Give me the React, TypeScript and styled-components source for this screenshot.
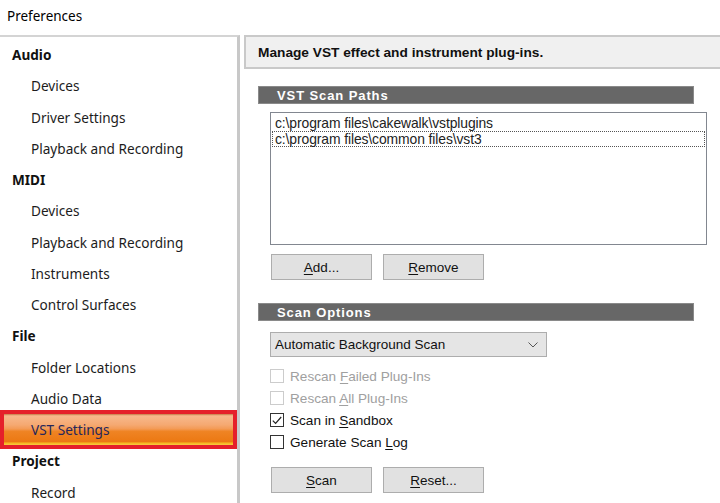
import React from 'react'
import styled, { createGlobalStyle } from 'styled-components'

const GlobalStyle = createGlobalStyle`
  html, body {
    margin: 0;
    padding: 0;
    background: #ffffff;
  }
  body {
    width: 720px;
    height: 503px;
    overflow: hidden;
    font-family: "Noto Sans", "Liberation Sans", sans-serif;
  }
`

const Window = styled.div`
  width: 720px;
  height: 503px;
  display: flex;
  flex-direction: column;
  background: #fff;
  overflow: hidden;
`

const TitleBar = styled.div`
  height: 35px;
  flex: none;
  display: flex;
  align-items: center;
  padding: 0 0 3px 7px;
  box-sizing: border-box;
  font-size: 13.5px;
  color: #000;
`

const Body = styled.div`
  flex: 1;
  display: flex;
  gap: 4px;
  min-height: 0;
`

const Tree = styled.div`
  width: 240px;
  flex: none;
  box-sizing: border-box;
  border-top: 2px solid #d4d4d4;
  border-right: 3px solid #c8c8c8;
  padding-top: 2px;
  display: flex;
  flex-direction: column;
  overflow: hidden;
`

const TreeRow = styled.div<{ $level: number; $selected?: boolean }>`
  height: 31.25px;
  flex: none;
  display: flex;
  align-items: center;
  box-sizing: border-box;
  padding-left: ${p => (p.$level === 0 ? 12 : 31)}px;
  font-size: 13.6px;
  font-weight: ${p => (p.$level === 0 ? 700 : 400)};
  color: ${p => (p.$level === 0 ? '#111' : '#1c1c1c')};
  white-space: nowrap;
  ${p =>
    p.$selected &&
    `
    height: 38.5px;
    margin: -3.6px 0;
    border: 4px solid #e5202a;
    padding-left: 27px;
    color: #26265c;
    background:
      linear-gradient(180deg,
        #c27a45 0%,
        #f7b88c 6%,
        #f5a972 35%,
        #f39a55 48%,
        #ef8424 56%,
        #ec7812 90%,
        #f4b21c 93%,
        #f8cc40 100%);
  `}
`

const Content = styled.div`
  flex: 1;
  display: flex;
  flex-direction: column;
  margin-right: -6px;
`

const Header = styled.div`
  height: 34px;
  flex: none;
  box-sizing: border-box;
  border: 2px solid #c9c9c9;
  background: #f0f0f0;
  display: flex;
  align-items: center;
  padding-left: 12px;
  font-family: "Liberation Sans", Arial, sans-serif;
  font-weight: 700;
  font-size: 13.7px;
  color: #111;
`

const Pane = styled.div`
  padding-left: 14px;
  display: flex;
  flex-direction: column;
  align-items: flex-start;
  font-family: "Liberation Sans", Arial, sans-serif;
`

const SectionBar = styled.div<{ $top: number }>`
  margin-top: ${p => p.$top}px;
  width: 436px;
  height: 18px;
  box-sizing: border-box;
  background: #676767;
  border: 1px solid #8a8a8a;
  color: #fff;
  font-weight: 700;
  font-size: 13px;
  letter-spacing: 0.9px;
  padding-left: 18px;
  display: flex;
  align-items: center;
`

const ListBox = styled.div`
  margin: 8px 0 0 12px;
  width: 437px;
  height: 133px;
  box-sizing: border-box;
  border: 1px solid #828790;
  background: #fff;
  padding: 2px 1px;
  display: flex;
  flex-direction: column;
`

const ListItem = styled.div<{ $focused?: boolean }>`
  height: 16px;
  box-sizing: border-box;
  display: flex;
  align-items: center;
  padding-left: 2px;
  font-size: 13.9px;
  color: #222;
  letter-spacing: -0.1px;
  border: 1px ${p => (p.$focused ? 'dotted #555' : 'solid transparent')};
`

const ButtonRow = styled.div<{ $top: number }>`
  margin: ${p => p.$top}px 0 0 13px;
  display: flex;
  gap: 11px;
`

const Button = styled.button`
  width: 101px;
  height: 26px;
  box-sizing: border-box;
  border: 1px solid #adadad;
  background: #e1e1e1;
  font-family: "Liberation Sans", Arial, sans-serif;
  font-size: 13.5px;
  color: #111;
  padding: 0;
  u {
    text-decoration-thickness: 1px;
    text-underline-offset: 2px;
  }
`

const Select = styled.div`
  margin: 11px 0 0 12px;
  width: 277px;
  height: 25px;
  box-sizing: border-box;
  border: 1px solid #adadad;
  background: #e5e5e5;
  display: flex;
  align-items: center;
  justify-content: space-between;
  padding: 0 8px 0 4px;
  font-size: 13.5px;
  color: #111;
`

const CheckList = styled.div`
  margin: 8px 0 0 12px;
  display: flex;
  flex-direction: column;
`

const CheckRow = styled.div<{ $disabled?: boolean }>`
  height: 22px;
  display: flex;
  align-items: center;
  gap: 6px;
  font-size: 13.6px;
  color: ${p => (p.$disabled ? '#a0a0a0' : '#111')};
  u {
    text-underline-offset: 2px;
  }
`

const Box = styled.span<{ $disabled?: boolean }>`
  width: 14px;
  height: 14px;
  box-sizing: border-box;
  border: 1px solid ${p => (p.$disabled ? '#cccccc' : '#333')};
  background: #fff;
  display: flex;
  align-items: center;
  justify-content: center;
`

const treeItems: { label: string; level: number; selected?: boolean }[] = [
  { label: 'Audio', level: 0 },
  { label: 'Devices', level: 1 },
  { label: 'Driver Settings', level: 1 },
  { label: 'Playback and Recording', level: 1 },
  { label: 'MIDI', level: 0 },
  { label: 'Devices', level: 1 },
  { label: 'Playback and Recording', level: 1 },
  { label: 'Instruments', level: 1 },
  { label: 'Control Surfaces', level: 1 },
  { label: 'File', level: 0 },
  { label: 'Folder Locations', level: 1 },
  { label: 'Audio Data', level: 1 },
  { label: 'VST Settings', level: 1, selected: true },
  { label: 'Project', level: 0 },
  { label: 'Record', level: 1 },
]

const Check = ({ checked, disabled, children }: { checked?: boolean; disabled?: boolean; children: React.ReactNode }) => (
  <CheckRow $disabled={disabled}>
    <Box $disabled={disabled}>
      {checked && (
        <svg width="10" height="9" viewBox="0 0 10 9">
          <path d="M0.8 4.6 L3.6 7.4 L9.2 1" fill="none" stroke="#222" strokeWidth="1.2" />
        </svg>
      )}
    </Box>
    <span>{children}</span>
  </CheckRow>
)

export default function App() {
  return (
    <Window>
      <GlobalStyle />
      <TitleBar>Preferences</TitleBar>
      <Body>
        <Tree>
          {treeItems.map((t, i) => (
            <TreeRow key={i} $level={t.level} $selected={t.selected}>
              {t.label}
            </TreeRow>
          ))}
        </Tree>
        <Content>
          <Header>Manage VST effect and instrument plug-ins.</Header>
          <Pane>
            <SectionBar $top={17}>VST Scan Paths</SectionBar>
            <ListBox>
              <ListItem>c:\program files\cakewalk\vstplugins</ListItem>
              <ListItem $focused>c:\program files\common files\vst3</ListItem>
            </ListBox>
            <ButtonRow $top={9}>
              <Button><u>A</u>dd...</Button>
              <Button><u>R</u>emove</Button>
            </ButtonRow>
            <SectionBar $top={23}>Scan Options</SectionBar>
            <Select>
              <span>Automatic Background Scan</span>
              <svg width="10" height="6" viewBox="0 0 10 6">
                <path d="M0.5 0.5 L5 5 L9.5 0.5" fill="none" stroke="#555" strokeWidth="1" />
              </svg>
            </Select>
            <CheckList>
              <Check disabled>Rescan <u>F</u>ailed Plug-Ins</Check>
              <Check disabled>Rescan <u>A</u>ll Plug-Ins</Check>
              <Check checked>Scan in <u>S</u>andbox</Check>
              <Check>Generate Scan <u>L</u>og</Check>
            </CheckList>
            <ButtonRow $top={14}>
              <Button><u>S</u>can</Button>
              <Button><u>R</u>eset...</Button>
            </ButtonRow>
          </Pane>
        </Content>
      </Body>
    </Window>
  )
}
